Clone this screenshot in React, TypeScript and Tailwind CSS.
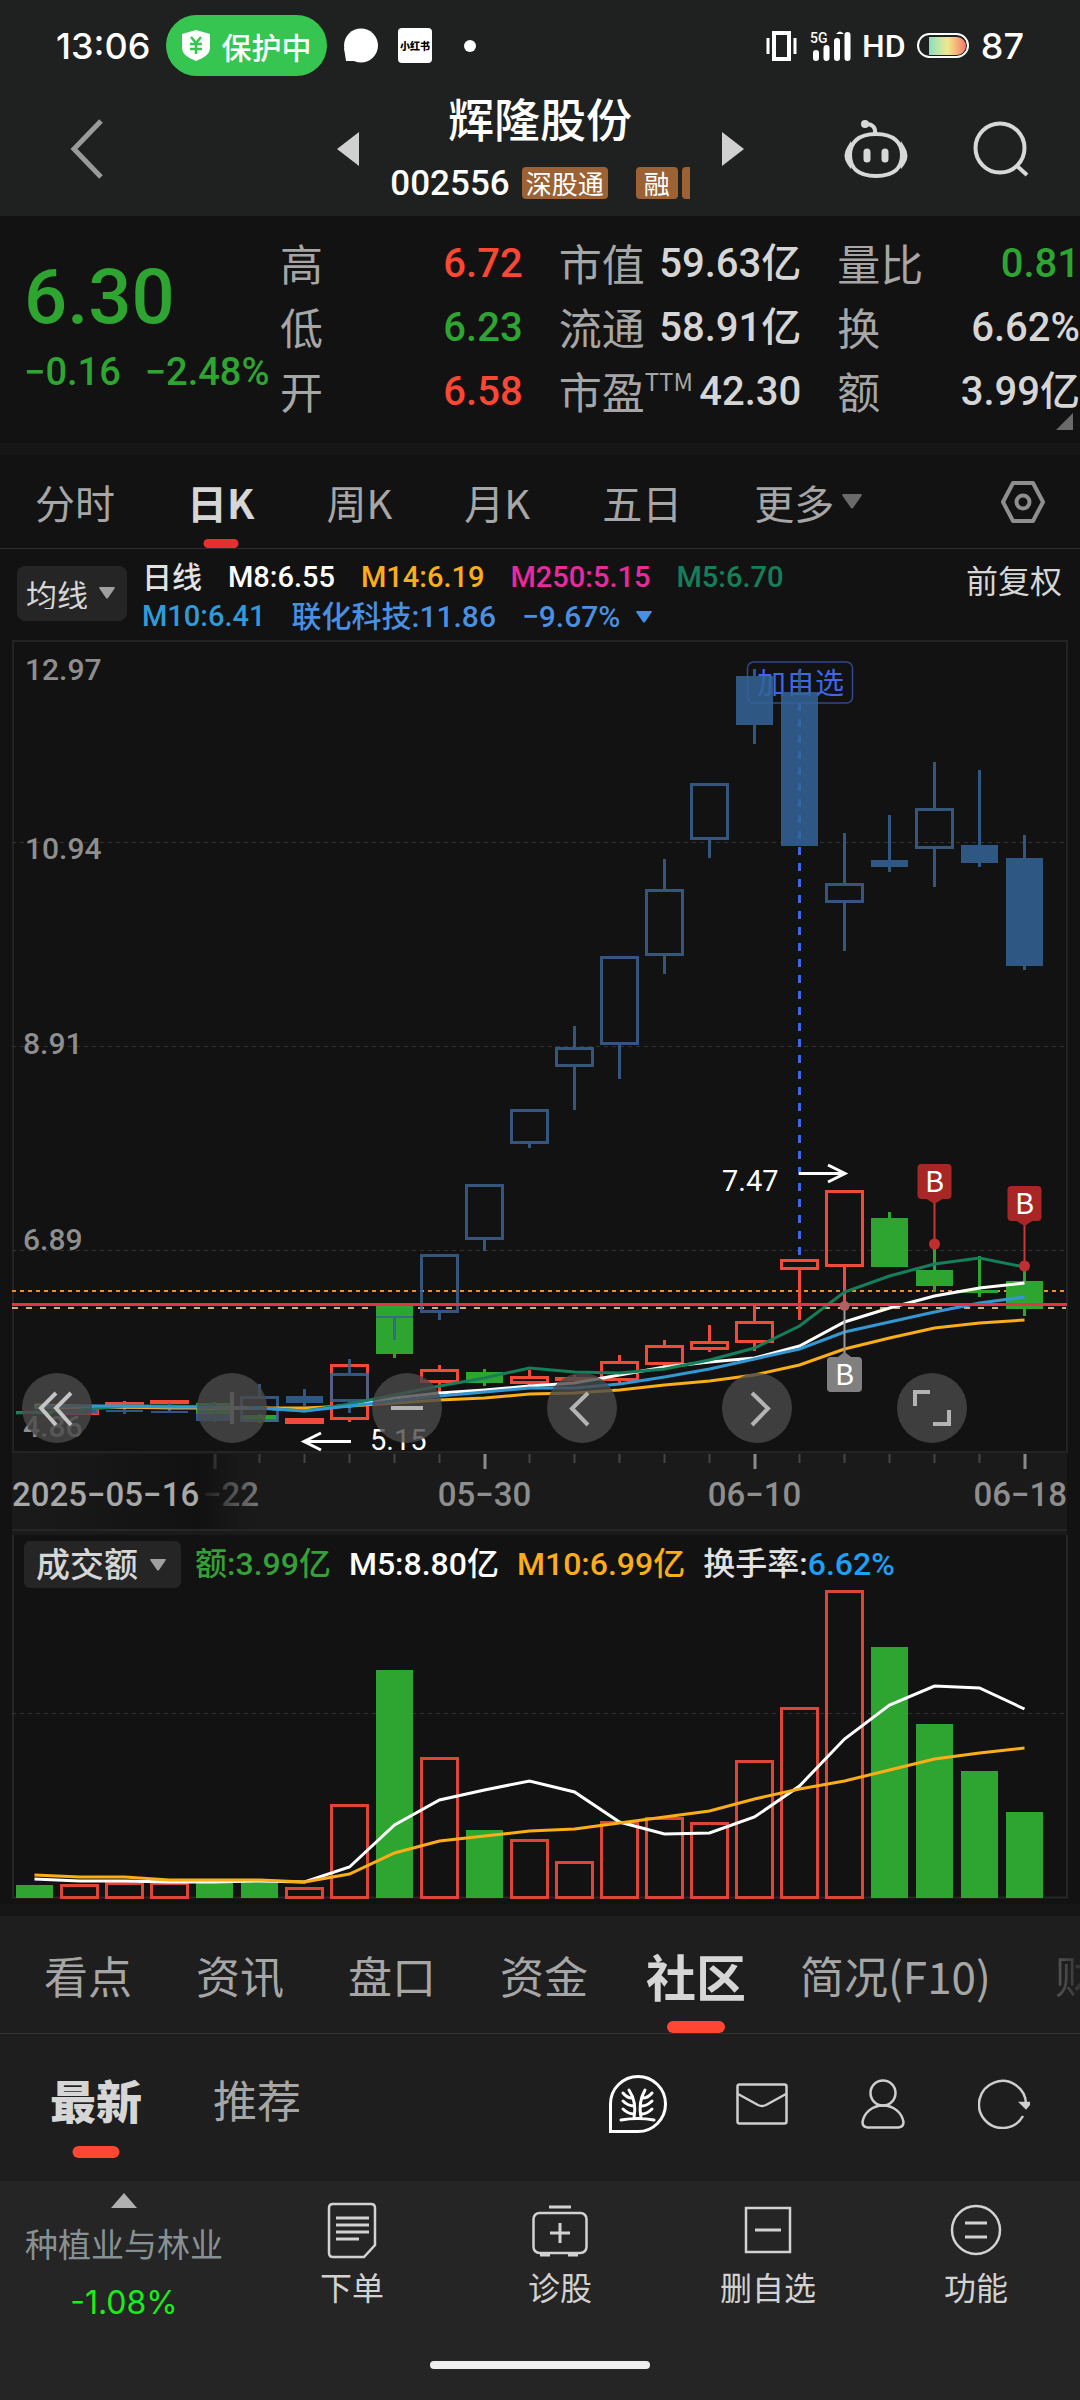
import type { ReactNode } from "react";

type Candle = {
    kind: "up" | "down";
    high: number;
    low: number;
    top: number;
    bottom: number;
};

const SLOT = 45;
const cx = (i: number) => 34.5 + SLOT * i;

const c = (kind: "up" | "down", high: number, top: number, bottom: number, low: number): Candle => ({
    kind,
    high,
    top,
    bottom,
    low,
});

// 辉隆股份
const mainCandles: Candle[] = [
    c("down", 1411, 1411, 1414, 1414),
    c("up", 1406, 1406, 1415, 1415),
    c("up", 1401, 1402, 1406, 1406),
    c("up", 1400, 1400, 1404, 1404),
    c("down", 1402, 1403, 1414, 1415),
    c("down", 1414, 1415, 1422, 1423),
    c("up", 1418, 1418, 1424, 1424),
    c("up", 1364, 1364, 1420, 1422),
    c("down", 1306, 1306, 1354, 1358),
    c("up", 1365, 1369, 1383, 1393),
    c("down", 1369, 1372, 1383, 1386),
    c("up", 1370, 1376, 1384, 1386),
    c("up", 1375, 1377, 1380, 1381),
    c("up", 1355, 1361, 1381, 1384),
    c("up", 1340, 1345, 1365, 1366),
    c("up", 1325, 1341, 1350, 1352),
    c("up", 1305, 1321, 1343, 1351),
    c("up", 1259, 1259, 1270, 1320),
    c("up", 1190, 1190, 1267, 1307),
    c("down", 1212, 1218, 1267, 1267),
    c("down", 1245, 1270, 1286, 1292),
    c("down", 1256, 1290, 1293, 1297),
    c("down", 1267, 1281, 1309, 1316),
];

// 联化科技（叠加）
const overlayCandles: (Candle | null)[] = [
    null,
    c("down", 1408, 1409, 1414, 1414),
    c("down", 1408, 1410, 1412, 1414),
    c("down", 1403, 1411, 1413, 1413),
    c("down", 1403, 1414, 1421, 1422),
    c("up", 1384, 1396, 1422, 1422),
    c("down", 1389, 1396, 1403, 1406),
    c("up", 1359, 1373, 1402, 1413),
    c("down", 1316, 1316, 1318, 1340),
    c("up", 1254, 1254, 1313, 1320),
    c("up", 1184, 1184, 1240, 1251),
    c("up", 1109, 1109, 1144, 1148),
    c("up", 1026, 1047, 1067, 1110),
    c("up", 956, 956, 1045, 1079),
    c("up", 859, 889, 956, 974),
    c("up", 783, 783, 840, 858),
    c("down", 669, 676, 725, 744),
    c("down", 670, 692, 846, 846),
    c("up", 833, 883, 903, 951),
    c("down", 815, 860, 867, 872),
    c("up", 762, 808, 849, 887),
    c("down", 770, 845, 863, 867),
    c("down", 835, 858, 966, 970),
];

const ma5 = [1412, 1410, 1406, 1406, 1407, 1408, 1411, 1404, 1395, 1386, 1378, 1368, 1372, 1373, 1369, 1360, 1348, 1326, 1292, 1276, 1264, 1258, 1267];
const ma8 = [1407, 1407, 1407, 1407, 1408, 1408, 1410, 1405, 1398, 1393, 1390, 1386, 1383, 1375, 1367, 1362, 1358, 1346, 1322, 1308, 1296, 1288, 1283];
const ma10 = [1407, 1406, 1406, 1407, 1407, 1408, 1411, 1406, 1401, 1396, 1392, 1388, 1388, 1384, 1377, 1369, 1359, 1349, 1332, 1322, 1312, 1303, 1297];
const ma14 = [1405, 1406, 1407, 1408, 1408, 1408, 1408, 1406, 1403, 1400, 1398, 1394, 1393, 1390, 1385, 1381, 1375, 1365, 1349, 1338, 1328, 1323, 1320];

const volumes: ["up" | "down", number][] = [
    ["down", 1885], ["up", 1884], ["up", 1882], ["up", 1882], ["down", 1882], ["down", 1882],
    ["up", 1887], ["up", 1804], ["down", 1670], ["up", 1757], ["down", 1830], ["up", 1839],
    ["up", 1861], ["up", 1821], ["up", 1817], ["up", 1822], ["up", 1760], ["up", 1707],
    ["up", 1590], ["down", 1647], ["down", 1724], ["down", 1771], ["down", 1812],
];
const vol5 = [1879, 1881, 1881, 1882, 1882, 1881, 1882, 1867, 1825, 1800, 1790, 1781, 1792, 1822, 1834, 1833, 1817, 1786, 1739, 1705, 1686, 1688, 1709];
const vol10 = [1875, 1877, 1877, 1880, 1880, 1880, 1882, 1874, 1853, 1841, 1836, 1831, 1829, 1823, 1817, 1811, 1799, 1789, 1781, 1770, 1759, 1753, 1748];

const toPoints = (ys: number[]) => ys.map((y, i) => `${cx(i)},${y}`).join(" ");

function CandleShape({ i, candle, up, down }: { i: number; candle: Candle; up: string; down: string }) {
    const x = cx(i);
    const { kind, high, low, top, bottom } = candle;
    const color = kind === "up" ? up : down;
    return (
        <g stroke={color} strokeWidth="3">
            {high < top && <line x1={x} x2={x} y1={high} y2={top} />}
            {low > bottom && <line x1={x} x2={x} y1={bottom} y2={low} />}
            {kind === "up" ? (
                <rect x={x - 18} y={top + 1.5} width="36" height={Math.max(bottom - top - 3, 1)} fill="none" />
            ) : (
                <rect x={x - 18.5} y={top} width="37" height={bottom - top} fill={color} stroke="none" />
            )}
        </g>
    );
}

function Pin({ x, y, to }: { x: number; y: number; to: number }) {
    return (
        <g>
            <line x1={x} x2={x} y1={y + 35} y2={to} stroke="#c93636" strokeWidth="2" />
            <circle cx={x} cy={to} r="5.5" fill="#c22e2e" />
            <rect x={x - 17} y={y} width="34" height="35" rx="4" fill="#a92626" />
            <path d={`M${x - 8} ${y + 35}h16l-8 5z`} fill="#a92626" />
            <text x={x} y={y + 28} textAnchor="middle" fontSize="29" fill="#fff">B</text>
        </g>
    );
}

function Caret({ className = "h-3 w-4" }: { className?: string }) {
    return (
        <svg viewBox="0 0 16 12" className={className} fill="currentColor" aria-hidden="true">
            <path d="M1 0h14q1.500 0 .5 1.500L9 11q-1 1-2 0L.5 1.500Q-.5 0 1 0z" />
        </svg>
    );
}

function StatusBar() {
    return (
        <div className="flex h-[61px] items-center justify-between pl-14 pr-14 text-white">
            <div className="flex items-center">
                <span className="w-[110px] font-[Inter] text-[36px] font-medium leading-none">13:06</span>
                <span className="flex h-[61px] w-[161px] items-center justify-center gap-3 rounded-full bg-[#37c551] text-[30px] font-medium leading-none">
                    <svg viewBox="0 0 28 31" className="h-[31px] w-7" aria-hidden="true">
                        <path d="M14 0 28 4v14q0 8-14 13Q0 26 0 18V4z" fill="#fff" />
                        <path d="M9 7l5 6 5-6M14 13v11M8 14h12M8 19h12" stroke="#37c551" strokeWidth="2.500" fill="none" />
                    </svg>
                    保护中
                </span>
                <svg viewBox="0 0 35 35" className="ml-4 h-[35px] w-[35px]" fill="#fff" aria-hidden="true">
                    <circle cx="18" cy="17.500" r="17" />
                    <path d="M1 20l2 13h14z" />
                </svg>
                <span className="ml-5 flex h-[35px] w-[34px] items-center justify-center rounded-sm bg-white text-[10px] font-black leading-none text-black">
                    小红书
                </span>
                <span className="ml-8 h-3 w-3 rounded-full bg-white" />
            </div>
            <div className="flex items-center">
                <svg viewBox="0 0 31 30" className="h-[30px] w-[31px]" fill="none" stroke="#fff" aria-hidden="true">
                    <rect x="8" y="2" width="15" height="26" strokeWidth="4" />
                    <path d="M2 7v16M29 7v16" strokeWidth="3" />
                </svg>
                <svg viewBox="0 0 42 30" className="ml-3 h-[30px] w-[42px] overflow-visible" aria-hidden="true">
                    <path d="M7 22v5M17.500 17v10M28 10v17M38.500 4v23" stroke="#fff" strokeWidth="6" strokeLinecap="round" />
                    <path d="M27 3q4-5 8 0z" fill="#fff" />
                    <text x="1" y="12" fontSize="14" fontWeight="500" fontFamily="Roboto" fill="#fff">5G</text>
                </svg>
                <span className="w-[66px] text-center font-[Roboto] text-[32px] font-medium leading-none">HD</span>
                <span className="flex h-[25px] w-[52px] items-center justify-end rounded-full border-2 border-white p-px">
                    <span className="h-[18px] w-[37px] rounded-r-full bg-linear-to-r from-[#83e0c0] via-[#efe98c] to-[#f2746a]" />
                </span>
                <span className="ml-3 font-[Inter] text-[36px] font-medium leading-none">87</span>
            </div>
        </div>
    );
}

function TitleBar() {
    return (
        <div className="flex h-[146px] items-center">
            <div className="w-[236px]">
                <button aria-label="返回" className="ml-[70px] block text-[#9a9a9a]">
                    <svg viewBox="0 0 34 60" className="h-[60px] w-[34px]" fill="none" stroke="currentColor" strokeWidth="5">
                        <path d="M31 2 4 30l27 28" />
                    </svg>
                </button>
            </div>
            <div className="flex flex-1 items-center justify-center">
                <button aria-label="上一只" className="text-[#d0d0d0]">
                    <svg viewBox="0 0 22 34" className="h-[34px] w-[22px]" fill="currentColor">
                        <path d="M22 0v34L0 17z" />
                    </svg>
                </button>
                <div className="flex w-[363px] flex-col items-center pb-2 text-white">
                    <h1 className="text-[46px] font-medium leading-[52px]">辉隆股份</h1>
                    <div className="mt-6 flex h-8 items-center">
                        <span className="mr-3 font-[Roboto] text-[35px] font-medium leading-none">002556</span>
                        <span className="h-8 rounded-sm bg-[#9c6234] px-1 text-[26px] leading-8">深股通</span>
                        <span className="ml-7 h-8 w-[42px] rounded-sm bg-[#9c6234] text-center text-[26px] leading-8">融</span>
                        <span className="ml-1 h-8 w-2 rounded-l-sm bg-[#9c6234]" />
                    </div>
                </div>
                <button aria-label="下一只" className="text-[#d0d0d0]">
                    <svg viewBox="0 0 22 34" className="h-[34px] w-[22px]" fill="currentColor">
                        <path d="M0 0v34l22-17z" />
                    </svg>
                </button>
            </div>
            <button aria-label="问答助手" className="text-[#d8d8d8]">
                <svg viewBox="0 0 64 60" className="h-[60px] w-16" fill="none" stroke="currentColor" strokeWidth="4">
                    <path d="M32 15C14 15 6 24 6 36s7 21 26 21 26-9 26-21-8-21-26-21z" />
                    <path d="M31 15c1-6-2-10-9-10" />
                    <circle cx="21" cy="5" r="4" fill="currentColor" stroke="none" />
                    <path d="M5 29q-5 8 0 15zM59 29q5 8 0 15z" fill="currentColor" />
                    <path d="M23 33v7M41 33v7" strokeWidth="7" strokeLinecap="round" />
                </svg>
            </button>
            <button aria-label="搜索" className="mr-[51px] ml-[65px] text-[#d8d8d8]">
                <svg viewBox="0 0 56 56" className="h-14 w-14" fill="none" stroke="currentColor" strokeWidth="4">
                    <circle cx="27" cy="27" r="24.500" />
                    <path d="M44 45l10 9" />
                </svg>
            </button>
        </div>
    );
}

function Quote({ label, value, tone = "text-[#d6d6d6]" }: { label: ReactNode; value: string; tone?: string }) {
    return (
        <div className="flex h-16 items-center justify-between whitespace-nowrap">
            <dt className="pb-1 text-[43px] leading-none text-[#a6a6a6]">{label}</dt>
            <dd className={`font-[Roboto,Noto_Sans_CJK_SC] text-[40px] font-medium leading-none ${tone}`}>{value}</dd>
        </div>
    );
}

function QuotePanel() {
    return (
        <section className="relative flex h-[227px] bg-[#121212] pt-4">
            <div className="w-[280px] shrink-0 whitespace-nowrap pl-6 font-[Roboto] text-[#2fa531]">
                <p className="mt-8 text-[76px] font-medium leading-[66px]">6.30</p>
                <p className="mt-5 flex gap-6 text-[38px] font-medium leading-11">
                    <span>−0.16</span>
                    <span>−2.48%</span>
                </p>
            </div>
            <dl className="grid flex-1 grid-cols-3 content-start gap-x-9">
                <Quote label="高" value="6.72" tone="text-[#fc4734]" />
                <Quote label="市值" value="59.63亿" />
                <Quote label="量比" value="0.81" tone="text-[#2fa531]" />
                <Quote label="低" value="6.23" tone="text-[#2fa531]" />
                <Quote label="流通" value="58.91亿" />
                <Quote label="换" value="6.62%" />
                <Quote label="开" value="6.58" tone="text-[#fc4734]" />
                <Quote
                    label={
                        <span className="flex items-start">
                            市盈<span className="text-[24px] leading-6">TTM</span>
                        </span>
                    }
                    value="42.30"
                />
                <Quote label="额" value="3.99亿" />
            </dl>
            <svg viewBox="0 0 17 17" className="absolute right-[7px] bottom-[13px] h-[17px] w-[17px] fill-[#6a6a6a]" aria-hidden="true">
                <path d="M17 0v17H0z" />
            </svg>
        </section>
    );
}

function PeriodTabs() {
    return (
        <nav className="flex h-[94px] items-center gap-[72px] border-b border-[#2e2e2e] pl-[35px] text-[40px] leading-none text-[#a6a6a6]">
            <button>分时</button>
            <button className="relative flex h-full items-center font-bold text-[#d6d6d6]">
                日K
                <span className="absolute bottom-0 left-1/2 h-[9px] w-[35px] -translate-x-1/2 rounded-full bg-[#e63030]" />
            </button>
            <button>周K</button>
            <button>月K</button>
            <button>五日</button>
            <button className="flex items-center gap-2" aria-haspopup="menu">
                更多
                <Caret className="h-[17px] w-5 text-[#6a6a6a]" />
            </button>
            <button aria-label="设置" className="mr-[35px] ml-auto text-[#8e8e8e]">
                <svg viewBox="0 0 44 42" className="h-[42px] w-11" fill="none" stroke="currentColor" strokeWidth="4">
                    <path d="M12 2h20l10 19-10 19H12L2 21z" strokeLinejoin="round" />
                    <circle cx="22" cy="21" r="6.500" />
                </svg>
            </button>
        </nav>
    );
}

function MaHeader() {
    return (
        <div className="flex h-[91px] items-start bg-[#121212] pt-[9px] pl-[17px]">
            <label className="relative mt-2 block shrink-0 text-[#d6d6d6]">
                <select aria-label="指标" className="h-[55px] w-[110px] appearance-none rounded-lg bg-[#252525] pl-[9px] text-[31px] leading-none outline-none">
                    <option>均线</option>
                </select>
                <Caret className="pointer-events-none absolute top-[21px] right-3 h-3 w-4 text-[#a0a0a0]" />
            </label>
            <div className="flex-1 pl-[15px] font-[Roboto,Noto_Sans_CJK_SC] text-[29px] font-medium leading-[39px] whitespace-nowrap">
                <p className="flex gap-[26px]">
                    <span className="text-[30px] text-[#e2e2e2]">日线</span>
                    <span className="text-white">M8:6.55</span>
                    <span className="text-[#fbae17]">M14:6.19</span>
                    <span className="text-[#e82a9f]">M250:5.15</span>
                    <span className="text-[#14805a]">M5:6.70</span>
                </p>
                <p className="flex items-center gap-[26px]">
                    <span className="text-[#2f9bd8]">M10:6.41</span>
                    <span className="text-[30px] text-[#4a90e2]">联化科技:11.86</span>
                    <span className="flex items-center gap-4 text-[30px] text-[#4a90e2]">
                        −9.67%
                        <Caret className="h-3 w-4 text-[#4291ea]" />
                    </span>
                </p>
            </div>
            <button className="mr-[18px] text-[32px] leading-[42px] text-[#d6d6d6]">前复权</button>
        </div>
    );
}

function KLineChart() {
    const ticks = Array.from({ length: 19 }, (_, k) => k + 4);
    return (
        <svg viewBox="0 640 1080 895" className="block w-full" role="img" aria-label="日K线图">
            <defs>
                <linearGradient id="axisFade" x1="0" x2="1" y1="0" y2="0">
                    <stop offset="0" stopColor="#141414" stopOpacity="0" />
                    <stop offset=".7" stopColor="#111" />
                    <stop offset=".76" stopColor="#111" stopOpacity=".8" />
                    <stop offset="1" stopColor="#1a1a1a" stopOpacity="0" />
                </linearGradient>
            </defs>
            <rect x="13" y="641" width="1054" height="811" fill="none" stroke="#232323" strokeWidth="2" />
            <g stroke="#323232" strokeDasharray="4 4">
                <path d="M12 842.500H1066M12 1046.500H1066M12 1250.500H1066" />
            </g>
            <g fontSize="30" fontWeight="500" fontFamily="Roboto" fill="#8e8e8e">
                <text x="25" y="680">12.97</text>
                <text x="25" y="859">10.94</text>
                <text x="23" y="1054">8.91</text>
                <text x="23" y="1250">6.89</text>
                <text x="23" y="1437">4.86</text>
            </g>

            {/* 加自选标记 */}
            <rect x="747.500" y="662" width="105" height="41" rx="6" fill="none" stroke="#33488f" strokeWidth="1.500" />
            <text x="757" y="694" fontSize="29" fill="#3f67e8">加自选</text>
            <line x1="799.500" x2="799.500" y1="703" y2="1256" stroke="#3f67e8" strokeWidth="3" strokeDasharray="8 8" />

            <path d="M12 1291H1066" stroke="#ee8a38" strokeWidth="2" strokeDasharray="4 4" />
            <path d="M12 1308H1066" stroke="#c8b083" strokeWidth="2" strokeDasharray="6 8" />

            {mainCandles.map((candle, i) => (
                <CandleShape key={i} i={i} candle={candle} up="#f04a38" down="#2fa531" />
            ))}
            <g opacity=".85">
                {overlayCandles.map(
                    (candle, i) => candle && <CandleShape key={i} i={i} candle={candle} up="#3a618f" down="#346499" />,
                )}
            </g>

            <g fill="none" strokeWidth="3">
                <polyline points={toPoints(ma8)} stroke="#fff" />
                <polyline points={toPoints(ma14)} stroke="#fbae17" />
                <polyline points={`16,1413 ${toPoints(ma5)}`} stroke="#14805a" />
                <polyline points={toPoints(ma10)} stroke="#3298d4" />
            </g>
            <path d="M12 1304.500H1067" stroke="#e63244" strokeWidth="3" />

            <Pin x={934.5} y={1164} to={1244} />
            <Pin x={1024.5} y={1186} to={1266} />
            <line x1="844.500" x2="844.500" y1="1306" y2="1357" stroke="#9a9a9a" strokeWidth="2" />
            <circle cx="844.500" cy="1306" r="5" fill="#b06060" />
            <path d="M836.500 1358h16l-8-6z" fill="#808080" />
            <rect x="827" y="1357" width="35" height="35" rx="4" fill="#808080" />
            <text x="844.500" y="1385" textAnchor="middle" fontSize="29" fill="#fff">B</text>

            <g fill="none" stroke="#fff" strokeWidth="3">
                <path d="M799 1173.500h45M828 1165l17 8.500-17 8.500" />
                <path d="M351 1441.500h-45M321 1433l-17 8.500 17 8.500" />
            </g>
            <g fontSize="29" fontFamily="Roboto" fill="#fff">
                <text x="722" y="1191">7.47</text>
                <text x="370" y="1450">5.15</text>
            </g>

            {/* 日期轴 */}
            <rect x="12" y="1453" width="1055" height="82" fill="#1a1a1a" />
            <path d="M12 1530H1067" stroke="#262626" strokeWidth="2" />
            {ticks.map((i) => {
                const major = (i - 4) % 6 === 0;
                return (
                    <rect key={i} x={cx(i) - 1} y="1454" width={major ? 3 : 2} height={major ? 15 : 9} fill={major ? "#8a8a8a" : "#444"} />
                );
            })}
            <g fontSize="33" fontWeight="500" fontFamily="Roboto" fill="#8e8e8e">
                <text x="259" y="1506" textAnchor="end">−22</text>
                <rect x="13" y="1454" width="260" height="75" fill="url(#axisFade)" />
                <text x="12" y="1506" fill="#a8a8a8">2025−05−16</text>
                <text x="484.500" y="1506" textAnchor="middle">05−30</text>
                <text x="754.500" y="1506" textAnchor="middle">06−10</text>
                <text x="1067" y="1506" textAnchor="end">06−18</text>
            </g>
        </svg>
    );
}

const controls: { label: string; d: string; tone: string }[] = [
    { label: "最早", d: "M34 20 19 35l15 17M49 20 34 35l15 17", tone: "text-[#c4c4c4]" },
    { label: "放大", d: "M35 19v32M19 35h32", tone: "text-[#585858]" },
    { label: "缩小", d: "M19 35h32", tone: "text-[#b4b4b4]" },
    { label: "左移", d: "M41 20 25 35.500 41 52", tone: "text-[#b4b4b4]" },
    { label: "右移", d: "M30 20l16 15.500L30 52", tone: "text-[#b4b4b4]" },
    { label: "全屏", d: "M18 33V19h15M52 37v14H36", tone: "text-[#b4b4b4]" },
];

function ChartControls() {
    return (
        <div className="absolute right-[113px] bottom-[92px] left-[22px] flex justify-between">
            {controls.map(({ label, d, tone }) => (
                <button key={label} aria-label={label} className={`h-[70px] w-[70px] rounded-full bg-[#4a4a4a]/80 ${tone}`}>
                    <svg viewBox="0 0 70 70" fill="none" stroke="currentColor" strokeWidth="4">
                        <path d={d} />
                    </svg>
                </button>
            ))}
        </div>
    );
}

function VolumePanel() {
    return (
        <section className="relative bg-[#121212]">
            <svg viewBox="0 1535 1080 369" className="block w-full" role="img" aria-label="成交额">
                <path d="M13 1535V1897.500H1067V1535" fill="none" stroke="#262626" strokeWidth="2" />
                <path d="M12 1713.500H1066" stroke="#323232" strokeDasharray="4 4" />
                {volumes.map(([kind, top], i) =>
                    kind === "down" ? (
                        <rect key={i} x={cx(i) - 18.5} y={top} width="37" height={1898 - top} fill="#2fa531" />
                    ) : (
                        <rect key={i} x={cx(i) - 18} y={top + 1.5} width="36" height={1896 - top} fill="none" stroke="#dc4636" strokeWidth="3" />
                    ),
                )}
                <polyline points={toPoints(vol5)} fill="none" stroke="#fff" strokeWidth="3" />
                <polyline points={toPoints(vol10)} fill="none" stroke="#fbae17" strokeWidth="3" />
            </svg>
            <div className="absolute inset-x-0 top-[6px] flex items-center gap-[18px] pl-6 font-[Roboto,Noto_Sans_CJK_SC] text-[32px] font-medium leading-[47px] whitespace-nowrap">
                <label className="relative -mr-1 block text-[#d6d6d6]">
                    <select aria-label="副图指标" className="block h-[47px] w-[157px] appearance-none rounded-md bg-[#252525] pl-3 text-[34px] leading-none outline-none">
                        <option>成交额</option>
                    </select>
                    <Caret className="pointer-events-none absolute top-[18px] right-[15px] h-3 w-4 text-[#a0a0a0]" />
                </label>
                <span className="text-[#36a038]">额:3.99亿</span>
                <span className="text-white">M5:8.80亿</span>
                <span className="text-[#fbae17]">M10:6.99亿</span>
                <span className="text-[#e2e2e2]">
                    换手率:<span className="text-[#1ea0f5]">6.62%</span>
                </span>
            </div>
        </section>
    );
}

function SectionTabs() {
    return (
        <nav className="relative flex h-[118px] items-center gap-16 overflow-hidden border-b border-[#333] pl-11 text-[44px] leading-none whitespace-nowrap text-[#a6a6a6]">
            <button className="shrink-0">看点</button>
            <button className="shrink-0">资讯</button>
            <button className="shrink-0">盘口</button>
            <button className="shrink-0">资金</button>
            <button className="relative flex h-full w-[88px] shrink-0 items-center justify-center text-[50px] font-bold text-[#d6d6d6]">
                <span className="shrink-0">社区</span>
                <span className="absolute bottom-0 left-1/2 h-3 w-[58px] -translate-x-1/2 rounded-full bg-[#ff4632]" />
            </button>
            <button className="-ml-1 shrink-0">简况(F10)</button>
            <button className="shrink-0 bg-linear-to-r from-[#555] to-[#1e1e1e] to-50% bg-clip-text text-transparent">财务</button>
        </nav>
    );
}

function FeedTabs() {
    return (
        <div className="flex h-[147px] items-center bg-[#1e1e1e] pl-[50px]">
            <button className="relative flex h-full items-center pb-[18px] text-[46px] leading-none font-black text-[#d6d6d6]">
                最新
                <span className="absolute bottom-[23px] left-1/2 h-3 w-[47px] -translate-x-1/2 rounded-full bg-[#ff4632]" />
            </button>
            <button className="ml-[71px] pb-[18px] text-[44px] leading-none text-[#a6a6a6]">推荐</button>
            <div className="mr-[50px] mb-2 ml-auto flex items-center gap-[69px] text-[#cfcfcf]">
                <button aria-label="社区" className="text-white">
                    <svg viewBox="0 0 58 58" className="h-[58px] w-[58px]" fill="none" stroke="currentColor" strokeWidth="3">
                        <path d="M1.500 56.500V29A27.500 27.500 0 1 1 29 56.500z" />
                        <path
                            d="M12 45q17-3 33 0M25 43q3-16-5-28M32 43q-3-16 4-28M14 18q4 5 9 5M14 26q5 5 11 5M14 34q5 5 11 5M43 18q-4 5-9 5M43 26q-5 5-10 5M43 34q-5 5-10 5"
                            strokeLinecap="round"
                        />
                    </svg>
                </button>
                <button aria-label="消息">
                    <svg viewBox="0 0 52 42" className="h-[42px] w-[52px]" fill="none" stroke="currentColor" strokeWidth="2.500">
                        <rect x="1.500" y="1.500" width="49" height="39" rx="2" />
                        <path d="M2 11l20 11q4 2 8 0l20-11" />
                    </svg>
                </button>
                <button aria-label="我的" className="px-1">
                    <svg viewBox="0 0 44 50" className="h-[50px] w-11" fill="none" stroke="currentColor" strokeWidth="2.500">
                        <circle cx="22" cy="14" r="12.500" />
                        <path d="M22 26.500C11 26.500 3 34 1.500 43q0 5 5 5.500h31q5-.5 5-5.500C41 34 33 26.500 22 26.500z" />
                    </svg>
                </button>
                <button aria-label="刷新">
                    <svg viewBox="0 0 52 50" className="h-[50px] w-[52px]" fill="none" stroke="currentColor" strokeWidth="2.500">
                        <path d="M45 37A23.500 23.500 0 1 1 48 25" />
                        <path d="M43 24h9l-4 5z" fill="currentColor" />
                    </svg>
                </button>
            </div>
        </div>
    );
}

function NavItem({ label, children }: { label: string; children: ReactNode }) {
    return (
        <button className="flex w-52 flex-col items-center pt-5 text-[#d2d2d2]">
            <svg viewBox="0 0 56 58" className="h-[58px] w-14" fill="none" stroke="currentColor" strokeWidth="2.500" aria-hidden="true">
                {children}
            </svg>
            <span className="mt-[7px] text-[32px] leading-10">{label}</span>
        </button>
    );
}

function BottomBar() {
    return (
        <footer className="h-[219px] bg-[#252525]">
            <div className="flex h-[180px] items-start">
                <button className="flex flex-1 flex-col items-center pt-3">
                    <svg viewBox="0 0 26 15" className="h-[15px] w-[26px] fill-[#b0b0b0]" aria-hidden="true">
                        <path d="M13 0l13 15H0z" />
                    </svg>
                    <span className="mt-[15px] text-[33px] leading-10 text-[#879194]">种植业与林业</span>
                    <span className="mt-[18px] font-[Inter] text-[32px] leading-11 text-[#1aee1a]">-1.08%</span>
                </button>
                <NavItem label="下单">
                    <path d="M9 3h38q4 0 4 4v37L40 56H9q-4 0-4-4V7q0-4 4-4z" />
                    <path d="M12 17h33M12 24h33M12 31h33M12 38h23" strokeWidth="3" />
                </NavItem>
                <NavItem label="诊股">
                    <rect x="1.500" y="12" width="53" height="40" rx="6" />
                    <path d="M17 6h22M28 22v20M18 32h20" strokeWidth="3" />
                    <path d="M8 54h10M36 54h10" strokeWidth="3" />
                </NavItem>
                <NavItem label="删自选">
                    <rect x="6" y="7" width="44" height="44" />
                    <path d="M15 29h26" strokeWidth="3" />
                </NavItem>
                <NavItem label="功能">
                    <circle cx="28" cy="29" r="24" />
                    <path d="M17 22h22M17 36h22" strokeWidth="3" />
                </NavItem>
            </div>
            <div className="mx-auto h-2 w-[220px] rounded-full bg-[#eee]" />
        </footer>
    );
}

export default function App() {
    return (
        <div className="min-h-screen bg-[#121212] font-['Noto_Sans_CJK_SC',sans-serif]">
            <header className="h-[216px] bg-[#1f2121] pt-[15px]">
                <StatusBar />
                <TitleBar />
            </header>
            <QuotePanel />
            <div className="h-3 bg-[#161616]" />
            <PeriodTabs />
            <MaHeader />
            <section className="relative">
                <KLineChart />
                <ChartControls />
            </section>
            <VolumePanel />
            <div className="h-3 bg-[#161616]" />
            <div className="bg-[#1e1e1e]">
                <SectionTabs />
                <FeedTabs />
            </div>
            <BottomBar />
        </div>
    );
}
